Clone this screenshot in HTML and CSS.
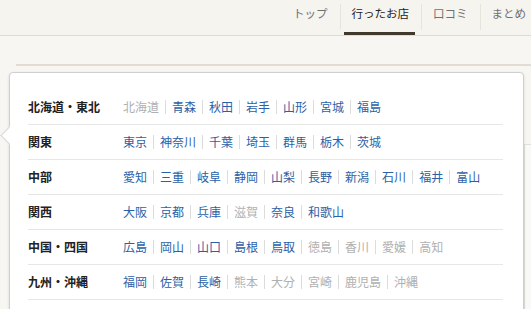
FILE: index.html
```html
<!DOCTYPE html>
<html lang="ja">
<head>
    <meta charset="UTF-8">
    <title>行ったお店</title>
    <link rel="stylesheet" href="styles.css">
</head>
<body>

    <div class="header">
        <ul class="nav">
            <li><a href="#">トップ</a></li>
            <li class="active"><a href="#">行ったお店</a></li>
            <li><a href="#">口コミ</a></li>
            <li><a href="#">まとめ</a></li>
        </ul>
    </div>

    <div class="content">
        <div class="content-bar"></div>
        <div class="side-card"></div>

        <div class="area-menu">
            <span class="arrow"></span>
            <dl class="area-row">
                <dt>北海道・東北</dt>
                <dd>
                    <span class="off">北海道</span>
                    <a href="#">青森</a>
                    <a href="#">秋田</a>
                    <a href="#">岩手</a>
                    <a href="#">山形</a>
                    <a href="#">宮城</a>
                    <a href="#">福島</a>
                </dd>
            </dl>
            <dl class="area-row">
                <dt>関東</dt>
                <dd>
                    <a href="#">東京</a>
                    <a href="#">神奈川</a>
                    <a href="#">千葉</a>
                    <a href="#">埼玉</a>
                    <a href="#">群馬</a>
                    <a href="#">栃木</a>
                    <a href="#">茨城</a>
                </dd>
            </dl>
            <dl class="area-row">
                <dt>中部</dt>
                <dd>
                    <a href="#">愛知</a>
                    <a href="#">三重</a>
                    <a href="#">岐阜</a>
                    <a href="#">静岡</a>
                    <a href="#">山梨</a>
                    <a href="#">長野</a>
                    <a href="#">新潟</a>
                    <a href="#">石川</a>
                    <a href="#">福井</a>
                    <a href="#">富山</a>
                </dd>
            </dl>
            <dl class="area-row">
                <dt>関西</dt>
                <dd>
                    <a href="#">大阪</a>
                    <a href="#">京都</a>
                    <a href="#">兵庫</a>
                    <span class="off">滋賀</span>
                    <a href="#">奈良</a>
                    <a href="#">和歌山</a>
                </dd>
            </dl>
            <dl class="area-row">
                <dt>中国・四国</dt>
                <dd>
                    <a href="#">広島</a>
                    <a href="#">岡山</a>
                    <a href="#">山口</a>
                    <a href="#">島根</a>
                    <a href="#">鳥取</a>
                    <span class="off">徳島</span>
                    <span class="off">香川</span>
                    <span class="off">愛媛</span>
                    <span class="off">高知</span>
                </dd>
            </dl>
            <dl class="area-row">
                <dt>九州・沖縄</dt>
                <dd>
                    <a href="#">福岡</a>
                    <a href="#">佐賀</a>
                    <a href="#">長崎</a>
                    <span class="off">熊本</span>
                    <span class="off">大分</span>
                    <span class="off">宮崎</span>
                    <span class="off">鹿児島</span>
                    <span class="off">沖縄</span>
                </dd>
            </dl>
        </div>
    </div>

</body>
</html>
```

FILE: styles.css
```css
body {
    font-family: "Noto Sans CJK JP", "Liberation Sans", sans-serif;
    margin: 0;
    background-color: #f7f6f2;
    color: #333;
    overflow: hidden;
    height: 309px;
}

.header {
    height: 35px;
    border-bottom: 1px solid #dedbd4;
    background-color: #f6f4ef;
}

.nav {
    display: flex;
    margin: 0 0 0 281px;
    padding: 0;
    list-style: none;
    white-space: nowrap;
}

.nav li {
    position: relative;
    height: 35px;
    padding: 0 12px;
    display: flex;
    align-items: center;
}

.nav li + li::before {
    content: "";
    position: absolute;
    left: 0;
    top: 4px;
    height: 26px;
    border-left: 1px solid #e7e4dd;
}

.nav a {
    color: #707070;
    font-size: 11.5px;
    text-decoration: none;
    margin-top: -10px;
}

.nav li.active a {
    color: #222;
}

.nav li.active::after {
    content: "";
    position: absolute;
    left: 4px;
    right: 6px;
    bottom: 0;
    height: 3px;
    background-color: #3f3a2d;
}

.content {
    position: relative;
    padding: 28px 0 0 16px;
}

.content-bar {
    height: 2px;
    background-color: #e2ddd0;
}

.side-card {
    margin: 78px 0 0 508px;
    height: 200px;
    border-top: 1px solid #e2e0da;
    border-left: 1px solid #e2e0da;
    background-color: #f9f9f7;
}

.area-menu {
    position: absolute;
    top: 36px;
    left: 9px;
    width: 495px;
    height: 260px;
    padding: 17px 0 0 18px;
    background-color: #fff;
    border: 1px solid #cfcfcf;
    border-radius: 4px;
    box-shadow: 0 1px 3px rgba(0, 0, 0, 0.12);
}

.arrow {
    position: absolute;
    left: -7px;
    top: 56px;
    width: 12px;
    height: 12px;
    background-color: #fff;
    border-left: 1px solid #d6d6d6;
    border-bottom: 1px solid #d6d6d6;
    transform: rotate(45deg);
}

.area-row {
    display: flex;
    margin: 0 20px 0 0;
    padding: 10px 0;
    line-height: 14px;
    border-bottom: 1px solid #e6e6e6;
    font-size: 12px;
}

.area-row dt {
    width: 95px;
    font-weight: bold;
    color: #222;
    flex-shrink: 0;
}

.area-row dd {
    display: flex;
    margin: 0;
}

.area-row a,
.area-row .off {
    padding: 0 6px;
    border-left: 1px solid #dcdcdc;
}

.area-row dd > :first-child {
    padding-left: 0;
    border-left: none;
}

.area-row a {
    color: #2c5fa6;
    text-decoration: none;
}

.area-row .off {
    color: #b0b0b0;
}
```
